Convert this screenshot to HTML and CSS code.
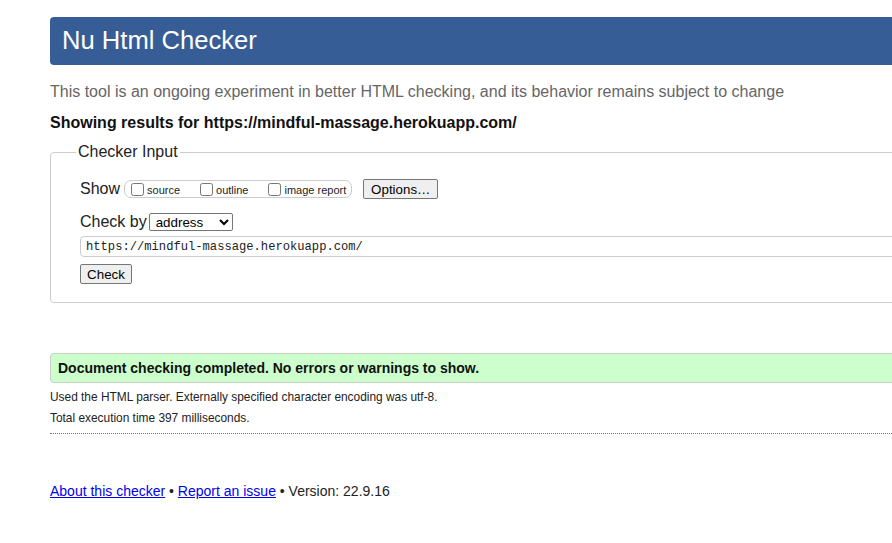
FILE: index.html
```html
<!DOCTYPE html>
<html lang="en">
<head>
<meta charset="utf-8">
<title>Nu Html Checker</title>
<link rel="stylesheet" href="styles.css">
</head>
<body>
<div class="page">
  <h1 class="title">Nu Html Checker</h1>
  <p class="intro">This tool is an ongoing experiment in better HTML checking, and its behavior remains subject to change</p>
  <p class="showing">Showing results for https://mindful-massage.herokuapp.com/</p>

  <fieldset class="checker">
    <legend class="legend">Checker Input</legend>
    <div class="row row-show">
      <span class="label">Show</span>
      <div class="opts">
        <label class="opt"><input type="checkbox" class="cb"><span>source</span></label>
        <label class="opt"><input type="checkbox" class="cb"><span>outline</span></label>
        <label class="opt"><input type="checkbox" class="cb"><span>image report</span></label>
      </div>
      <button class="btn btn-options" type="button">Options…</button>
    </div>
    <div class="row row-by">
      <span class="label">Check by</span>
      <select class="sel"><option>address</option></select>
    </div>
    <div class="row-url">
      <input class="url" type="text" value="https://mindful-massage.herokuapp.com/">
    </div>
    <div class="row-check">
      <button class="btn btn-check" type="button">Check</button>
    </div>
  </fieldset>

  <p class="success">Document checking completed. No errors or warnings to show.</p>
  <p class="details">Used the HTML parser. Externally specified character encoding was utf-8.</p>
  <p class="details">Total execution time 397 milliseconds.</p>
  <hr class="sep">

  <p class="footer"><a href="#">About this checker</a> • <a href="#">Report an issue</a> • Version: 22.9.16</p>
</div>
</body>
</html>
```

FILE: styles.css
```css
html, body {
  margin: 0;
  padding: 0;
  background: #fff;
  overflow: hidden;
}
body {
  font-family: "Liberation Sans", Arial, sans-serif;
  color: #000;
}
.page {
  padding: 17px 0 0 50px;
  width: 1000px;
}
.title {
  margin: 0;
  height: 48px;
  line-height: 47px;
  padding-left: 12px;
  background: #365d95;
  color: #fff;
  font-size: 25.6px;
  font-weight: normal;
  border-radius: 4px 0 0 4px;
}
.intro {
  margin: 17px 0 0;
  font-size: 16px;
  line-height: 20px;
  color: #666;
}
.showing {
  margin: 11px 0 0;
  font-size: 16px;
  line-height: 20px;
  font-weight: bold;
  color: #111;
}
.checker {
  margin: 10px 0 0;
  padding: 0 0 18px 29px;
  border: 1px solid #ccc;
  border-radius: 4px;
  min-width: 0;
}
.legend {
  margin-left: -4px;
  padding: 0 2px;
  font-size: 16px;
  line-height: 18px;
  color: #222;
}
.row {
  display: flex;
  align-items: center;
  height: 20px;
}
.row-show {
  margin-top: 18px;
}
.label {
  font-size: 16px;
  color: #222;
}
.opts {
  display: flex;
  align-items: center;
  height: 16px;
  margin-left: 4px;
  padding: 0 5px 0 6px;
  border: 1px solid #ccc;
  border-radius: 7px;
  gap: 20px;
}
.opt {
  display: flex;
  align-items: center;
  gap: 3px;
  font-size: 11px;
  color: #222;
}
.opt span {
  position: relative;
  top: 1px;
}
.cb {
  margin: 0;
  width: 13px;
  height: 13px;
}
.btn {
  font-family: "Liberation Sans", Arial, sans-serif;
  font-size: 13.33px;
  height: 20px;
  padding: 0;
  border: 1px solid #767676;
  border-radius: 2px;
  background: #efefef;
  color: #000;
  text-align: center;
}
.btn-options {
  width: 75px;
  margin-left: 11px;
}
.row-by {
  margin-top: 13px;
}
.sel {
  margin-left: 2px;
  width: 84px;
  height: 18px;
  font-family: "Liberation Sans", Arial, sans-serif;
  font-size: 13.33px;
  border: 1px solid #767676;
  border-radius: 2px;
  background: #fff;
  color: #000;
  padding: 0 0 0 2px;
}
.row-url {
  margin-top: 4px;
}
.url {
  box-sizing: border-box;
  display: block;
  width: 900px;
  height: 21px;
  margin: 0;
  padding: 0 5px;
  border: 1px solid #ccc;
  border-radius: 4px;
  font-family: "Liberation Mono", "DejaVu Sans Mono", monospace;
  font-size: 12.15px;
  color: #222;
  outline: none;
}
.row-check {
  margin-top: 7px;
  height: 20px;
}
.btn-check {
  width: 52px;
}
.success {
  margin: 50px 0 0;
  height: 28px;
  line-height: 28px;
  padding-left: 7px;
  background: #ccffcc;
  border: 1px solid #ccc;
  border-radius: 4px;
  font-size: 14px;
  font-weight: bold;
  color: #111;
}
.details {
  margin: 0;
  font-size: 11.9px;
  line-height: 21px;
  color: #222;
}
.success + .details {
  margin-top: 4px;
}
.sep {
  margin: 4px 0 0;
  height: 0;
  border: 0;
  border-top: 1px dotted #777;
}
.footer {
  margin: 47px 0 0;
  font-size: 14px;
  line-height: 20px;
  color: #222;
}
.footer a {
  color: #0000ee;
  text-decoration: underline;
}
```
